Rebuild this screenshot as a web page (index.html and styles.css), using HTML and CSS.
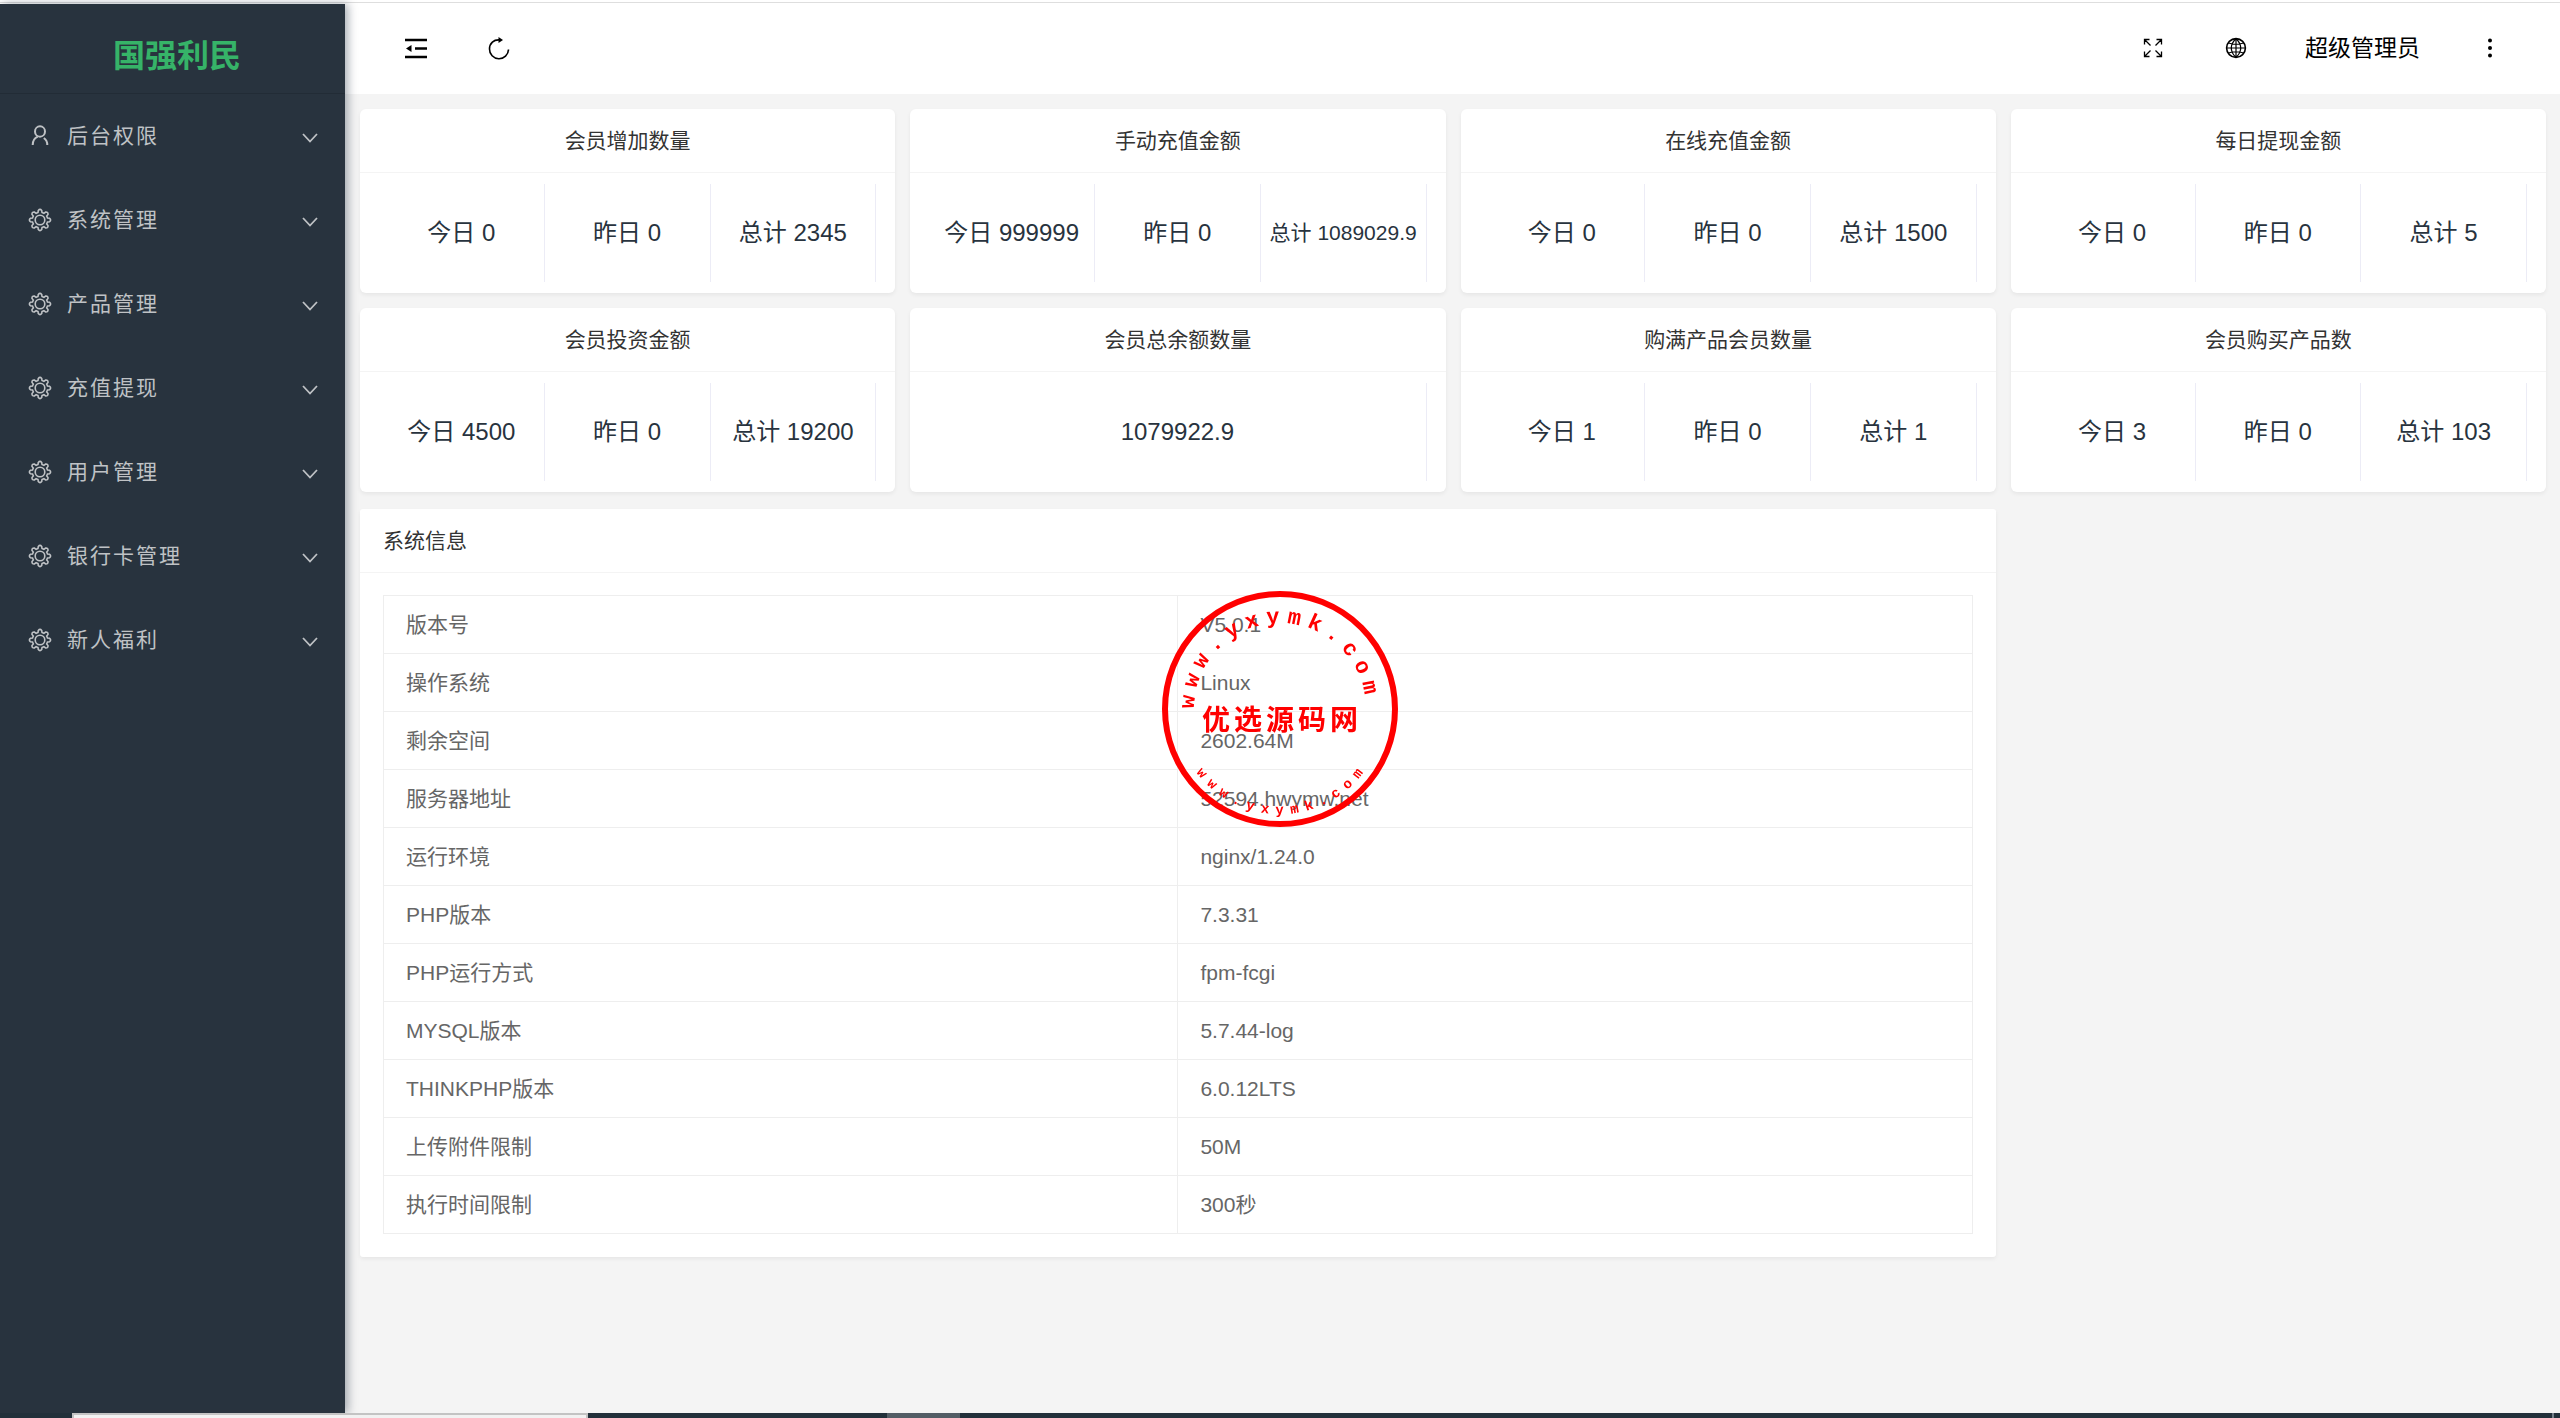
FILE: index.html
```html
<!DOCTYPE html>
<html lang="zh-CN">
<head>
  <meta charset="UTF-8">
  <meta name="viewport" content="width=device-width, initial-scale=1.0">
  <title>国强利民</title>
  <link rel="stylesheet" href="styles.css">
</head>
<body>
  <svg class="hide">
    <symbol id="icon-gear" viewBox="-12 -12 24 24">
      <path d="M-2-7.5 L-1.7-9.6 Q0-11.6 1.7-9.6 L2-7.5 L3.9-6.7 L5.6-8 Q8.2-8.2 8-5.6 L6.7-3.9 L7.5-2 L9.6-1.7 Q11.6 0 9.6 1.7 L7.5 2 L6.7 3.9 L8 5.6 Q8.2 8.2 5.6 8 L3.9 6.7 L2 7.5 L1.7 9.6 Q0 11.6-1.7 9.6 L-2 7.5 L-3.9 6.7 L-5.6 8 Q-8.2 8.2-8 5.6 L-6.7 3.9 L-7.5 2 L-9.6 1.7 Q-11.6 0-9.6-1.7 L-7.5-2 L-6.7-3.9 L-8-5.6 Q-8.2-8.2-5.6-8 L-3.9-6.7 Z"/>
      <circle r="4.8"/>
    </symbol>
    <symbol id="icon-user" viewBox="-12 -12 24 24">
      <ellipse cx="0" cy="-4.5" rx="5" ry="5.2"/>
      <path d="M-7.3 9 C-7.3 4.5-5.5 2-2.3 0.6 M3.8 2 C6 3.5 7.3 6 7.3 9"/>
    </symbol>
    <symbol id="icon-down" viewBox="0 0 18 18">
      <path d="M2 5 L9 12.5 L16 5"/>
    </symbol>
  </svg>

  <div class="window-edge"></div>

  <div class="layout">
    <aside class="side">
      <h1 class="logo">国强利民</h1>
      <nav class="menu">
        <button type="button" class="menu-item"><svg class="menu-icon user-icon"><use href="#icon-user"/></svg><span>后台权限</span><svg class="menu-arrow"><use href="#icon-down"/></svg></button>
        <button type="button" class="menu-item"><svg class="menu-icon"><use href="#icon-gear"/></svg><span>系统管理</span><svg class="menu-arrow"><use href="#icon-down"/></svg></button>
        <button type="button" class="menu-item"><svg class="menu-icon"><use href="#icon-gear"/></svg><span>产品管理</span><svg class="menu-arrow"><use href="#icon-down"/></svg></button>
        <button type="button" class="menu-item"><svg class="menu-icon"><use href="#icon-gear"/></svg><span>充值提现</span><svg class="menu-arrow"><use href="#icon-down"/></svg></button>
        <button type="button" class="menu-item"><svg class="menu-icon"><use href="#icon-gear"/></svg><span>用户管理</span><svg class="menu-arrow"><use href="#icon-down"/></svg></button>
        <button type="button" class="menu-item"><svg class="menu-icon"><use href="#icon-gear"/></svg><span>银行卡管理</span><svg class="menu-arrow"><use href="#icon-down"/></svg></button>
        <button type="button" class="menu-item"><svg class="menu-icon"><use href="#icon-gear"/></svg><span>新人福利</span><svg class="menu-arrow"><use href="#icon-down"/></svg></button>
      </nav>
    </aside>

    <div class="main">
      <header class="header">
        <div class="header-group">
          <button type="button" class="header-button" aria-label="收起菜单">
            <svg class="header-icon" viewBox="0 0 24 24">
              <path d="M1 4 H23 M11 12.5 H23 M1 21 H23" stroke-width="2.4"/>
              <path d="M7.5 9 V16 L2 12.5 Z" fill="currentColor" stroke="none"/>
            </svg>
          </button>
          <button type="button" class="header-button" aria-label="刷新">
            <svg class="header-icon" viewBox="0 0 24 24">
              <path d="M13.5 4 C6.5 3 2.5 7.5 2.5 13 A9.5 9.5 0 0 0 21.5 13.5" stroke-width="1.6"/>
              <path d="M11.5 1 L16 4 L11.5 7 Z" fill="currentColor" stroke="none"/>
            </svg>
          </button>
        </div>
        <div class="header-group">
          <button type="button" class="header-button" aria-label="全屏">
            <svg class="header-icon" viewBox="0 0 24 24">
              <path d="M3.5 8.5 V3.5 H8.5 M3.5 3.5 L9.5 9.5 M15.5 3.5 H20.5 V8.5 M20.5 3.5 L14.5 9.5 M3.5 15.5 V20.5 H8.5 M3.5 20.5 L9.5 14.5 M15.5 20.5 H20.5 V15.5 M20.5 20.5 L14.5 14.5" stroke-width="1.3"/>
            </svg>
          </button>
          <button type="button" class="header-button" aria-label="语言">
            <svg class="header-icon" viewBox="0 0 24 24">
              <circle cx="12" cy="12" r="9.4" stroke-width="1.6"/>
              <path d="M12 2.5 V21.5 M2.5 12 H21.5 M4.5 7 Q12 9.5 19.5 7 M4.5 17 Q12 14.5 19.5 17 M12 2.5 Q2.5 12 12 21.5 M12 2.5 Q21.5 12 12 21.5" stroke-width="1.2"/>
            </svg>
          </button>
          <button type="button" class="header-button user">超级管理员</button>
          <button type="button" class="header-button" aria-label="更多">
            <svg class="header-icon" viewBox="0 0 24 24">
              <g fill="currentColor" stroke="none"><circle cx="12" cy="4.5" r="2"/><circle cx="12" cy="12" r="2"/><circle cx="12" cy="19.5" r="2"/></g>
            </svg>
          </button>
        </div>
      </header>

      <main class="content">
        <section class="card">
          <h2 class="card-title">会员增加数量</h2>
          <div class="stats"><div class="stat">今日 0</div><div class="stat">昨日 0</div><div class="stat">总计 2345</div></div>
        </section>
        <section class="card">
          <h2 class="card-title">手动充值金额</h2>
          <div class="stats"><div class="stat">今日 999999</div><div class="stat">昨日 0</div><div class="stat small">总计 1089029.9</div></div>
        </section>
        <section class="card">
          <h2 class="card-title">在线充值金额</h2>
          <div class="stats"><div class="stat">今日 0</div><div class="stat">昨日 0</div><div class="stat">总计 1500</div></div>
        </section>
        <section class="card">
          <h2 class="card-title">每日提现金额</h2>
          <div class="stats"><div class="stat">今日 0</div><div class="stat">昨日 0</div><div class="stat">总计 5</div></div>
        </section>
        <section class="card">
          <h2 class="card-title">会员投资金额</h2>
          <div class="stats"><div class="stat">今日 4500</div><div class="stat">昨日 0</div><div class="stat">总计 19200</div></div>
        </section>
        <section class="card">
          <h2 class="card-title">会员总余额数量</h2>
          <div class="stats"><div class="stat">1079922.9</div></div>
        </section>
        <section class="card">
          <h2 class="card-title">购满产品会员数量</h2>
          <div class="stats"><div class="stat">今日 1</div><div class="stat">昨日 0</div><div class="stat">总计 1</div></div>
        </section>
        <section class="card">
          <h2 class="card-title">会员购买产品数</h2>
          <div class="stats"><div class="stat">今日 3</div><div class="stat">昨日 0</div><div class="stat">总计 103</div></div>
        </section>

        <section class="card system">
          <h2 class="card-title">系统信息</h2>
          <div class="card-body">
            <table class="info">
              <tbody>
                <tr><th scope="row">版本号</th><td>V5.0.1</td></tr>
                <tr><th scope="row">操作系统</th><td>Linux</td></tr>
                <tr><th scope="row">剩余空间</th><td>2602.64M</td></tr>
                <tr><th scope="row">服务器地址</th><td>52594.hwymw.net</td></tr>
                <tr><th scope="row">运行环境</th><td>nginx/1.24.0</td></tr>
                <tr><th scope="row">PHP版本</th><td>7.3.31</td></tr>
                <tr><th scope="row">PHP运行方式</th><td>fpm-fcgi</td></tr>
                <tr><th scope="row">MYSQL版本</th><td>5.7.44-log</td></tr>
                <tr><th scope="row">THINKPHP版本</th><td>6.0.12LTS</td></tr>
                <tr><th scope="row">上传附件限制</th><td>50M</td></tr>
                <tr><th scope="row">执行时间限制</th><td>300秒</td></tr>
              </tbody>
            </table>
          </div>
        </section>
      </main>
    </div>
  </div>

  <div class="taskbar">
    <div class="taskbar-window"></div>
    <div class="taskbar-active"></div>
    <div class="taskbar-end"></div>
  </div>

  <!-- round seal in the middle of the page -->
  <svg class="seal" viewBox="-120 -120 240 240">
    <defs>
      <path id="seal-top" d="M-86 0 A86 86 0 0 1 86 0"/>
      <path id="seal-bottom" d="M-105 0 A105 105 0 0 0 105 0"/>
    </defs>
    <circle r="115" class="seal-ring"/>
    <text class="seal-arc"><textPath href="#seal-top" startOffset="0">www.yxymk.com</textPath></text>
    <text class="seal-name" x="2" y="21">优选源码网</text>
    <text class="seal-arc-small"><textPath href="#seal-bottom" startOffset="51%">www.yxymk.com</textPath></text>
  </svg>
</body>
</html>
```

FILE: styles.css
```css
* {
  box-sizing: border-box;
}
body {
  margin: 0;
  height: 100vh;
  display: flex;
  flex-direction: column;
  overflow: hidden;
  background-color: #f4f4f4;
  font-family: "Liberation Sans", "Noto Sans CJK SC", sans-serif;
  font-size: 21px;
  line-height: 30px;
  color: #333;
}
button {
  border: none;
  background: none;
  padding: 0;
  font: inherit;
  color: inherit;
  cursor: pointer;
}
svg {
  fill: none;
  stroke: currentColor;
}
.hide {
  display: none;
}
.window-edge {
  flex: none;
  height: 4px;
  border-top: 2px solid #fff;
  background: linear-gradient(#dedede 1px, #fff 1px);
}
.layout {
  flex: 1;
  min-height: 0;
  display: flex;
}

/* sidebar */
.side {
  flex: none;
  width: 345px;
  background-color: #28333e;
  box-shadow: 3px 0 9px rgba(0, 21, 41, 0.35);
  color: #bfc2c5;
  z-index: 1;
}
.logo {
  margin: 0;
  height: 90px;
  padding: 14px 0 0 9px;
  border-bottom: 1px solid #222c36;
  display: flex;
  align-items: center;
  justify-content: center;
  font-size: 32px;
  color: #36b368;
}
.menu-item {
  width: 100%;
  height: 84px;
  padding: 0 26px 0 28px;
  display: flex;
  align-items: center;
  gap: 15px;
  letter-spacing: 2px;
}
.menu-icon {
  width: 24px;
  height: 24px;
  stroke-width: 1.6;
}
.user-icon {
  stroke-width: 2;
}
.menu-arrow {
  width: 18px;
  height: 18px;
  margin: 4px 0 0 auto;
  stroke-width: 1.8;
}

/* header */
.main {
  flex: 1;
  min-width: 0;
}
.header {
  height: 90px;
  padding: 0 29px 2px;
  display: flex;
  justify-content: space-between;
  background-color: #fff;
  color: #000;
}
.header-group {
  display: flex;
}
.header-button {
  min-width: 83px;
  display: flex;
  align-items: center;
  justify-content: center;
}
.header-icon {
  width: 24px;
  height: 24px;
}
.user {
  padding: 0 28px;
  font-size: 23px;
}

/* cards */
.content {
  padding: 15px 14px 15px 15px;
  display: grid;
  grid-template-columns: repeat(4, 1fr);
  gap: 15px;
}
.card {
  background-color: #fff;
  border-radius: 6px;
  box-shadow: 0 2px 4px rgba(0, 0, 0, 0.06);
}
.card-title {
  margin: 0;
  height: 64px;
  line-height: 63px;
  padding: 0 23px;
  border-bottom: 1px solid #f4f4f4;
  font-size: 21px;
  font-weight: normal;
  text-align: center;
}
.stats {
  height: 120px;
  padding: 11px 19px;
  display: flex;
}
.stat {
  flex: 1;
  display: flex;
  align-items: center;
  justify-content: center;
  border-right: 1px solid #ececf6;
  font-size: 24px;
  color: #28333e;
  white-space: nowrap;
}
.stat.small {
  font-size: 21px;
}
.system {
  grid-column: span 3;
  margin-top: 2px;
  border-radius: 3px;
}
.system .card-title {
  text-align: left;
}
.card-body {
  padding: 22px 23px 23px;
}
.info {
  width: 100%;
  table-layout: fixed;
  border-collapse: collapse;
  color: #666;
}
.info th,
.info td {
  height: 58px;
  padding: 0 22px;
  border: 1px solid #eee;
  font-weight: normal;
  text-align: left;
}

/* top edge of the desktop taskbar */
.taskbar {
  flex: none;
  height: 5px;
  display: flex;
  padding: 0 6px 0 72px;
  background-color: #22303a;
  z-index: 2;
}
.taskbar-window {
  width: 516px;
  border: 2px solid #c3c3c3;
  border-bottom: none;
  background-color: #f1f1f1;
}
.taskbar-active {
  width: 73px;
  margin-left: 299px;
  background-color: #535d65;
}
.taskbar-end {
  width: 2px;
  margin-left: auto;
  background-color: #75808a;
}

/* seal */
.seal {
  position: fixed;
  top: 50%;
  left: 50%;
  width: 240px;
  height: 240px;
  transform: translate(-50%, -50%);
  pointer-events: none;
  z-index: 3;
}
.seal-ring {
  stroke: #f00;
  stroke-width: 6;
}
.seal text {
  fill: #f00;
  stroke: none;
  font-weight: bold;
}
.seal-arc {
  font-family: "Liberation Mono", monospace;
  font-size: 22px;
  letter-spacing: 7px;
}
.seal-arc-small {
  font-family: "Liberation Mono", monospace;
  font-size: 14px;
  letter-spacing: 7px;
  text-anchor: middle;
}
.seal-name {
  font-family: "Noto Sans CJK SC", sans-serif;
  font-size: 28px;
  letter-spacing: 4px;
  text-anchor: middle;
}
```
